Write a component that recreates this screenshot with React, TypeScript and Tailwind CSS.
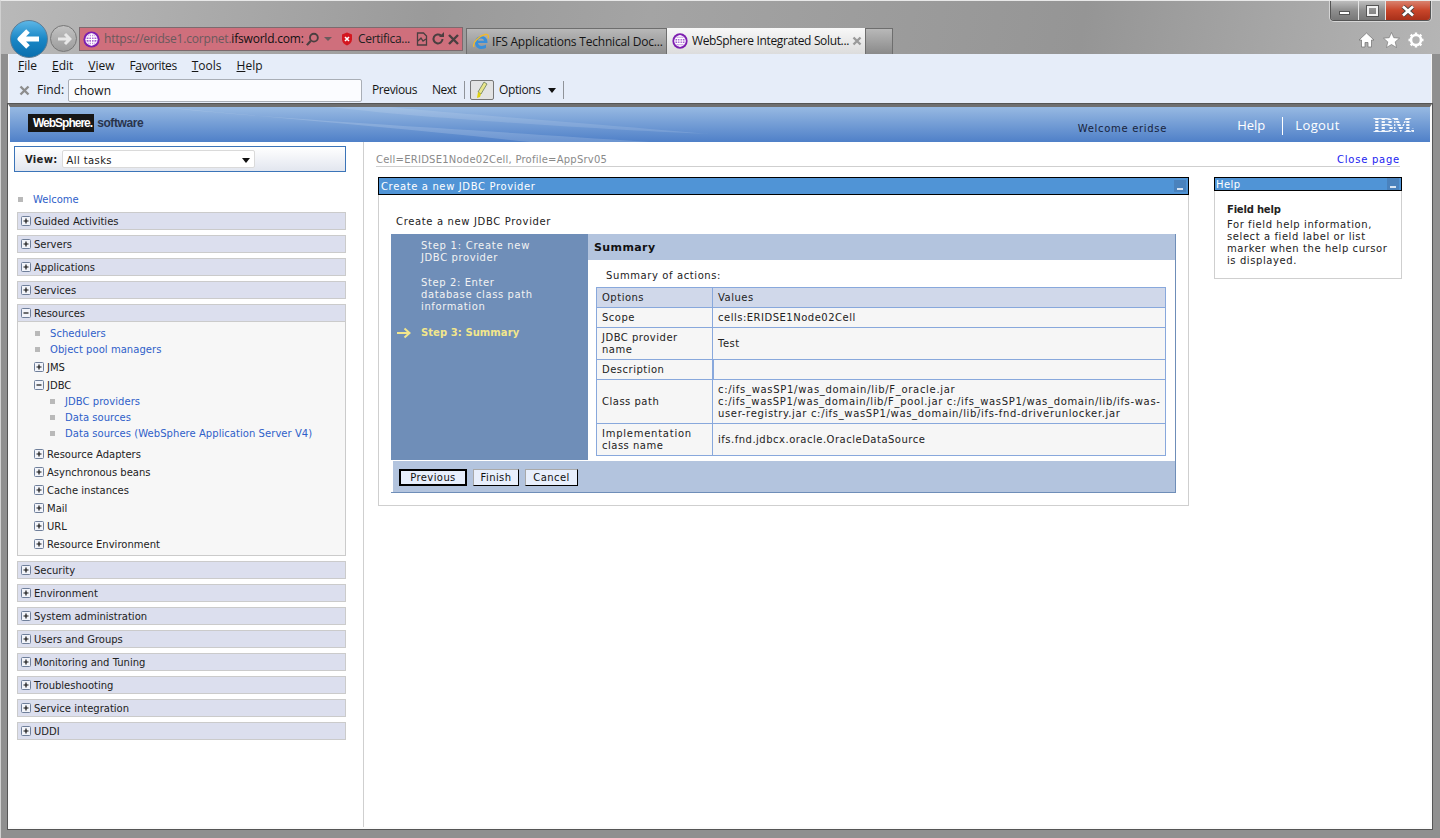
import React from "react";

const V = "font-['DejaVu_Sans',sans-serif]";
const W = `${V} text-[10px]`;
const UI = "font-['Open_Sans','Noto_Sans',sans-serif]";

function Globe({ s = 22 }: { s?: number }) {
  return (
    <svg width={s} height={s} viewBox="0 0 22 22" className="shrink-0">
      <circle cx="11" cy="11" r="10.5" fill="#7d1fb0" />
      <circle cx="11" cy="11" r="7.2" fill="#a55fd0" stroke="#f0e4f8" strokeWidth="1.6" />
      <ellipse cx="11" cy="11" rx="3.4" ry="7" fill="none" stroke="#f0e4f8" strokeWidth="1.5" />
      <path d="M3.500 11h15M5 7.500h12M5 14.500h12M11 3.500v15" stroke="#fff" strokeWidth="1.500" />
    </svg>
  );
}

function PM({ open }: { open?: boolean }) {
  return (
    <svg width="10" height="10" viewBox="0 0 10 10" className="shrink-0">
      <rect x="0.5" y="0.5" width="9" height="9" fill="#f2f4fa" stroke="#6f7f9a" rx="1" />
      <path d={open ? "M2.500 5h5" : "M2.500 5h5M5 2.500v5"} stroke="#111" strokeWidth="1.200" />
    </svg>
  );
}

function Sq() {
  return <span className="block w-[5px] h-[5px] bg-[#b9b9b9] shrink-0" />;
}

function Section({ label, open }: { label: string; open?: boolean }) {
  return (
    <div className={`h-[18px] flex items-center gap-[3px] pl-[3px] bg-[#dcdfee] border border-[#cbcbcb] text-[#222] ${W}`}>
      <PM open={open} />
      <span>{label}</span>
    </div>
  );
}

function NavLink({ label, pad }: { label: string; pad: string }) {
  return (
    <div className={`h-[16px] flex items-center gap-[10px] ${pad} text-[#2f5fc9] ${W} tracking-[0.05px]`}>
      <Sq />
      <span>{label}</span>
    </div>
  );
}

function Sub({ label, open, h = "h-[18px]" }: { label: string; open?: boolean; h?: string }) {
  return (
    <div className={`${h} flex items-center gap-[3px] pl-[16px] text-[#222] ${W}`}>
      <PM open={open} />
      <span>{label}</span>
    </div>
  );
}

function Mini() {
  return (
    <span className="w-[12px] h-[12px] bg-[#4a82bd] flex items-end justify-center pb-[2px] shrink-0">
      <span className="block w-[6px] h-[2px] bg-[#d7e4f3]" />
    </span>
  );
}

function Row({ a, b, h, head, desc }: { a: React.ReactNode; b?: React.ReactNode; h: string; head?: boolean; desc?: boolean }) {
  const bg = head ? "bg-[#d0d8ea]" : "bg-[#f6f6f6]";
  return (
    <div className={`flex ${h} border-b border-[#88a8dc] ${bg} text-[#222] ${W} tracking-[0.5px]`}>
      <div className="w-[116px] shrink-0 border-r border-[#88a8dc] px-[5px] flex items-center leading-[12px]">{a}</div>
      <div className={`flex-1 pl-[5px] pr-[2px] flex items-center leading-[12px] ${desc ? "border-l border-t border-[#88a8dc] -mt-px" : ""}`}>{b}</div>
    </div>
  );
}

function Btn({ label, w, primary }: { label: string; w: string; primary?: boolean }) {
  return (
    <div
      className={`${w} h-[17px] flex items-center justify-center bg-[#e8effc] text-[#111] ${W} tracking-[0.4px] ${
        primary ? "border-2 border-black" : "border border-[#a9a9a9] border-r-black border-b-black"
      }`}
    >
      {label}
    </div>
  );
}

export default function App() {
  return (
    <div className="w-[1440px] h-[838px] overflow-hidden flex flex-col bg-[#8f8f8f] border-t border-t-[#e8e8e8] border-l border-l-[#d0d0d0]">
      {/* Frame top: navigation, address bar, tabs */}
      <div className="h-[53px] shrink-0 relative bg-[linear-gradient(100deg,#b9b9b9_0%,#9a9a9a_30%,#a4a4a4_45%,#959595_75%,#b5b5b5_100%)]">
        <div className="absolute right-[9px] top-0 h-[20px] w-[101px] flex rounded-b-[4px] overflow-hidden border border-t-0 border-[#555] shadow-[0_0_0_1px_rgba(255,255,255,0.5)]">
          <div className="w-[28px] flex items-end justify-center pb-[5px] bg-[linear-gradient(#bdbdbd,#8e8e8e_50%,#777)] border-r border-[#e5e5e5]">
            <span className="block w-[11px] h-[4px] bg-white border border-[#555]" />
          </div>
          <div className="w-[27px] flex items-center justify-center bg-[linear-gradient(#bdbdbd,#8e8e8e_50%,#777)] border-r border-[#e5e5e5]">
            <span className="block w-[11px] h-[10px] border-2 border-[#f1f1f1] outline outline-1 outline-[#555]" />
          </div>
          <div className="flex-1 flex items-center justify-center bg-[linear-gradient(#d9826f,#c8452a_50%,#a8301a)]">
            <svg width="14" height="12" viewBox="0 0 14 12">
              <path d="M2 1.500l10 9M12 1.500l-10 9" stroke="#444" strokeWidth="4.400" />
              <path d="M2 1.500l10 9M12 1.500l-10 9" stroke="#fff" strokeWidth="2.800" />
            </svg>
          </div>
        </div>

        <div className="absolute left-[9px] top-[19px] w-[38px] h-[38px] rounded-full z-10 border border-[#5c7d96] bg-[linear-gradient(#5cb6e6,#1a87c6_50%,#0a6fae)] flex items-center justify-center">
          <svg width="24" height="22" viewBox="0 0 24 22">
            <path d="M11 3L3 11l8 8M4 11h18" fill="none" stroke="#fff" strokeWidth="5" strokeLinejoin="round" />
          </svg>
        </div>
        <div className="absolute left-[49px] top-[24px] w-[27px] h-[27px] rounded-full border border-[#777] bg-[linear-gradient(#c2c2c2,#9c9c9c)] flex items-center justify-center">
          <svg width="16" height="14" viewBox="0 0 16 14">
            <path d="M9 2l5 5-5 5M13 7H2" fill="none" stroke="#e8e8e8" strokeWidth="3" />
          </svg>
        </div>

        <div className="flex items-end h-full pl-[78px] pr-[10px]">
          <div className={`w-[384px] shrink-0 h-[24px] mb-[3px] flex items-center bg-[#cf6f7c] border border-[#7c6a6e] pl-[3px] text-[#222] ${UI} text-[12px] tracking-[-0.2px]`}>
            <Globe s={17} />
            <span className="ml-[4px] w-[196px] shrink-0 whitespace-nowrap text-[#6a5a5c]">
              https://eridse1.corpnet.<span className="text-[#111]">ifsworld.com:</span>
            </span>
            <svg width="15" height="15" viewBox="0 0 16 16" className="ml-[5px] shrink-0">
              <circle cx="9.500" cy="6" r="4.200" fill="none" stroke="#4a3f40" strokeWidth="2" />
              <path d="M6 9.500L2 14" stroke="#4a3f40" strokeWidth="2.400" />
            </svg>
            <span className="ml-[4px] w-0 h-0 border-x-[4px] border-x-transparent border-t-[4px] border-t-[#6a5a5c]" />
            <svg width="12" height="14" viewBox="0 0 12 14" className="ml-[9px] shrink-0">
              <path d="M6 .5l5 2v5c0 3-2.500 5-5 6-2.500-1-5-3-5-6v-5z" fill="#d4161f" />
              <path d="M4 5l4 4M8 5L4 9" stroke="#fff" strokeWidth="1.600" />
            </svg>
            <span className="ml-[5px] w-[55px] shrink-0 whitespace-nowrap tracking-[-0.3px]">Certifica...</span>
            <svg width="14" height="14" viewBox="0 0 14 14" className="ml-[2px] shrink-0">
              <path d="M2.500 1h6l3 3v9h-9z" fill="none" stroke="#4a3f40" strokeWidth="1.300" />
              <path d="M3 9l3-3 2 3 3-2" fill="none" stroke="#4a3f40" strokeWidth="1.300" />
            </svg>
            <svg width="14" height="14" viewBox="0 0 14 14" className="ml-[2px] shrink-0">
              <path d="M11.500 7a4.500 4.500 0 1 1-1.500-3.400" fill="none" stroke="#4a3f40" strokeWidth="2" />
              <path d="M8 5h5V0z" fill="#4a3f40" />
            </svg>
            <svg width="13" height="13" viewBox="0 0 13 13" className="ml-[2px] shrink-0">
              <path d="M2 2l9 9M11 2l-9 9" stroke="#4a3f40" strokeWidth="2.400" />
            </svg>
          </div>

          <div className={`ml-[3px] w-[201px] shrink-0 h-[26px] flex items-center gap-[2px] pl-[5px] bg-[linear-gradient(#b8b8b8,#8e8e8e)] border border-b-0 border-[#6e6e6e] text-[#151515] whitespace-nowrap ${UI} text-[12px] tracking-[-0.2px]`}>
            <svg width="18" height="18" viewBox="0 0 18 18" className="shrink-0">
              <path d="M15.500 10H6c.3 3 4.500 4 8 1.500v3.500c-5 2.500-11 .5-11-5.500C3 4 9 1.500 13 4c2 1.300 2.500 3.500 2.500 6zM6 7.800h6c-.3-3-5.700-3-6 0z" fill="#3a8fd9" />
              <path d="M2 14C0 10 7 3 13 1.500c3-.6 4 1 3 4" fill="none" stroke="#f2b92c" strokeWidth="1.300" />
            </svg>
            <span>IFS Applications Technical Doc...</span>
          </div>
          <div className={`w-[199px] shrink-0 h-[26px] flex items-center pl-[5px] bg-[linear-gradient(#f8f8f8,#dcdcdc)] border-r border-[#6e6e6e] text-[#151515] whitespace-nowrap ${UI} text-[12px] tracking-[-0.35px]`}>
            <Globe s={16} />
            <span className="ml-[4px] w-[157px] shrink-0">WebSphere Integrated Solut...</span>
            <svg width="10" height="10" viewBox="0 0 10 10" className="ml-[3px] shrink-0">
              <path d="M1.500 1.500l7 7M8.500 1.500l-7 7" stroke="#9a9a9a" strokeWidth="2.400" />
            </svg>
          </div>
          <div className="w-[27px] shrink-0 h-[26px] bg-[linear-gradient(#b8b8b8,#8a8a8a)] border-r border-t border-[#6e6e6e]" />

          <div className="flex-1 flex justify-end items-center gap-[8px] h-[26px] mb-[1px] pr-[6px]">
            <svg width="17" height="16" viewBox="0 0 17 16">
              <path d="M8.500 1L1 8h2.500v7h3.500v-4.500h3V15h3.500V8H16z" fill="#fff" stroke="#6d6d6d" strokeWidth=".7" />
            </svg>
            <svg width="17" height="16" viewBox="0 0 17 16">
              <path d="M8.500.5l2.300 5.200 5.700.5-4.300 3.700 1.300 5.600-5-3-5 3 1.300-5.600L.5 6.200l5.700-.5z" fill="#fff" stroke="#6d6d6d" strokeWidth=".6" />
            </svg>
            <svg width="16" height="16" viewBox="0 0 16 16">
              <circle cx="8" cy="8" r="5" fill="none" stroke="#fff" strokeWidth="2.600" />
              <path d="M8 .5v3M8 12.500v3M.5 8h3M12.500 8h3M2.700 2.700l2.100 2.100M11.200 11.200l2.100 2.100M13.300 2.700l-2.100 2.100M4.800 11.200l-2.100 2.100" stroke="#fff" strokeWidth="2.400" />
            </svg>
          </div>
        </div>
      </div>

      {/* Inner browser area with frame sides */}
      <div className="flex-1 min-h-0 flex flex-col pl-[7px] pr-[8px] pb-[9px]">
        <div className={`h-[50px] shrink-0 bg-[#e6edf9] border-l border-r border-[#f5f5f5] pl-[9px] pt-[1px] text-[#151515] ${UI} text-[12px]`}>
          <div className="h-[22px] flex items-center gap-[15px]">
            <span><span className="underline">F</span>ile</span>
            <span><span className="underline">E</span>dit</span>
            <span><span className="underline">V</span>iew</span>
            <span className="tracking-[-0.4px]">F<span className="underline">a</span>vorites</span>
            <span><span className="underline">T</span>ools</span>
            <span><span className="underline">H</span>elp</span>
          </div>
          <div className="h-[26px] flex items-center">
            <svg width="11" height="11" viewBox="0 0 11 11" className="ml-px shrink-0">
              <path d="M1.500 1.500l8 8M9.500 1.500l-8 8" stroke="#8d8d8d" strokeWidth="2.400" />
            </svg>
            <span className="ml-[7px] w-[26px]">Find:</span>
            <div className="ml-[5px] w-[294px] h-[23px] bg-[#fbfcff] border border-[#a9aeb6] rounded-[2px] pl-[5px] pt-[1px] flex items-center shrink-0">chown</div>
            <span className="ml-[10px] w-[45px] tracking-[-0.4px] whitespace-nowrap">Previous</span>
            <span className="ml-[15px] w-[24px] tracking-[-0.5px] whitespace-nowrap">Next</span>
            <span className="ml-[8px] w-px h-[18px] bg-[#8f9399]" />
            <div className="ml-[5px] w-[24px] h-[20px] rounded-[2px] border border-[#777] bg-[#e3e3e3] flex items-center justify-center shrink-0">
              <svg width="14" height="18" viewBox="0 0 14 18">
                <path d="M9 1l3 2-6 10-3-2z" fill="#e8e58a" stroke="#6a7a5a" strokeWidth=".8" />
                <path d="M3 11l3 2-1 3-3 1z" fill="#e0d20f" />
              </svg>
            </div>
            <span className="ml-[5px] w-[42px] tracking-[-0.4px] whitespace-nowrap">Options</span>
            <span className="ml-[7px] w-0 h-0 border-x-[4px] border-x-transparent border-t-[5px] border-t-[#111]" />
            <span className="ml-[7px] w-px h-[18px] bg-[#8f9399]" />
          </div>
        </div>

        <div className="flex-1 min-h-0 flex flex-col bg-white border-t-[3px] border-t-[#6f6f6f] border-x-2 border-x-[#fbfbfb] border-b-2 border-b-[#fbfbfb] outline outline-1 outline-[#555]">
          {/* Banner */}
          <div className="h-[35px] shrink-0 relative bg-[linear-gradient(#97b9e2,#4f80c8)] overflow-hidden flex items-center pl-[18px] pr-[16px]">
            <svg className="absolute inset-0 w-full h-full" viewBox="0 0 1420 35" preserveAspectRatio="none">
              <path d="M150 0C260 12 420 20 640 35H520C380 20 260 10 150 0z" fill="#ffffff" opacity="0.16" />
              <path d="M320 0C420 12 620 24 700 27L640 22C560 15 440 6 380 0z" fill="#ffffff" opacity="0.12" />
            </svg>
            <div className="relative flex items-center self-start mt-[7px]">
              <span className="h-[18px] pl-[5px] pr-[2px] bg-[#161616] text-white font-['Liberation_Sans',sans-serif] font-bold text-[12px] tracking-[-1px] flex items-center">WebSphere.</span>
              <span className="ml-[3px] text-[#29344d] font-['Liberation_Sans',sans-serif] font-bold text-[12px] tracking-[-0.4px]">software</span>
            </div>
            <span className={`relative ml-auto mt-[8px] text-[#17233c] ${W} tracking-[0.7px]`}>Welcome eridse</span>
            <span className={`relative ml-[70px] mt-[3px] text-white ${UI} text-[13px]`}>Help</span>
            <span className="relative ml-[17px] mt-[3px] w-px h-[18px] bg-white" />
            <span className={`relative ml-[12px] mt-[3px] text-white ${UI} text-[13px] tracking-[0.4px]`}>Logout</span>
            <span className="relative ml-[33px] mt-[1px] font-['Liberation_Serif',serif] font-bold text-[21px] tracking-[-1.5px] leading-none bg-[repeating-linear-gradient(#f4f7fc_0px,#f4f7fc_2px,transparent_2px,transparent_3px)] bg-clip-text text-transparent">IBM.</span>
          </div>

          <div className="flex-1 min-h-0 flex">
            {/* Sidebar */}
            <div className="w-[354px] shrink-0 border-r border-[#cfcfcf] pl-[4px] pr-[17px] pt-[4px]">
              <div className="h-[26px] w-[332px] border border-[#3b74b8] bg-[linear-gradient(#ffffff,#e2e6ef)] flex items-center pl-[10px]">
                <span className={`font-bold text-[#222] ${W} tracking-[0.3px]`}>View:</span>
                <div className={`ml-[4px] w-[193px] h-[18px] bg-white border border-[#dadada] rounded-[2px] flex items-center pl-[4px] pr-[4px] pt-[2px] text-[#222] ${W} tracking-[0.4px]`}>
                  <span className="flex-1">All tasks</span>
                  <span className="w-0 h-0 border-x-[4px] border-x-transparent border-t-[5px] border-t-[#111]" />
                </div>
              </div>
              <div className="ml-[3px] w-[329px]">
                <div className={`mt-[19px] h-[16px] flex items-center gap-[10px] pl-[1px] text-[#2f5fc9] ${W}`}>
                  <Sq />
                  <span>Welcome</span>
                </div>
                <div className="mt-[5px] flex flex-col gap-[5px]">
                  <Section label="Guided Activities" />
                  <Section label="Servers" />
                  <Section label="Applications" />
                  <Section label="Services" />
                  <div>
                    <Section label="Resources" open />
                    <div className="h-[234px] bg-[#f7f7f7] border border-t-0 border-[#cbcbcb] pt-[3px]">
                      <NavLink label="Schedulers" pad="pl-[17px]" />
                      <NavLink label="Object pool managers" pad="pl-[17px]" />
                      <div className="h-px" />
                      <Sub label="JMS" />
                      <Sub label="JDBC" open h="h-[17px] pt-[1px]" />
                      <NavLink label="JDBC providers" pad="pl-[32px]" />
                      <NavLink label="Data sources" pad="pl-[32px]" />
                      <NavLink label="Data sources (WebSphere Application Server V4)" pad="pl-[32px]" />
                      <div className="h-[4px]" />
                      <Sub label="Resource Adapters" />
                      <Sub label="Asynchronous beans" />
                      <Sub label="Cache instances" />
                      <Sub label="Mail" />
                      <Sub label="URL" />
                      <Sub label="Resource Environment" />
                    </div>
                  </div>
                  <Section label="Security" />
                  <Section label="Environment" />
                  <Section label="System administration" />
                  <Section label="Users and Groups" />
                  <Section label="Monitoring and Tuning" />
                  <Section label="Troubleshooting" />
                  <Section label="Service integration" />
                  <Section label="UDDI" />
                </div>
              </div>
            </div>

            {/* Main */}
            <div className="flex-1 min-w-0 pl-[12px] pr-[30px] pt-[10px]">
              <div className={`h-[15px] border-b border-[#cfcfcf] flex items-center justify-between ${W} leading-[12px] pt-[2px]`}>
                <span className="text-[#8a8a8a] tracking-[0.23px]">Cell=ERIDSE1Node02Cell, Profile=AppSrv05</span>
                <span className="text-[#1c1cf0] tracking-[0.75px]">Close page</span>
              </div>
              <div className="mt-[10px] flex items-start">
                <div className="ml-[2px] w-[811px] shrink-0">
                  <div className={`h-[18px] bg-[#5094d6] border border-black flex items-center justify-between pl-[2px] pr-[2px] text-white ${W} tracking-[0.63px]`}>
                    <span>Create a new JDBC Provider</span>
                    <Mini />
                  </div>
                  <div className="h-[311px] border border-t-0 border-[#cfcfcf] pl-[12px] pr-[12px] pt-[21px]">
                    <div className={`pl-[5px] h-[12px] leading-[12px] text-[#222] ${W} tracking-[0.65px]`}>Create a new JDBC Provider</div>
                    <div className="mt-[6px] h-[259px] border-r border-b border-[#6f8eb8] flex flex-col">
                      <div className="h-[226px] flex">
                        <div className={`w-[197px] shrink-0 bg-[#6f8eb8] text-[#f3f3f3] pt-[6px] ${W} leading-[12px] tracking-[0.6px]`}>
                          <div className="pl-[30px] pr-[10px]">
                            <span className="tracking-[0.73px]">Step 1: Create new</span>
                            <br />
                            JDBC provider
                          </div>
                          <div className="pl-[30px] mt-[13px]">
                            Step 2: Enter
                            <br />
                            database class path
                            <br />
                            information
                          </div>
                          <div className="mt-[14px] pl-[5px] flex items-center text-[#f2e68c] font-bold tracking-[0.07px]">
                            <svg width="15" height="12" viewBox="0 0 15 12" className="shrink-0 mr-[10px]">
                              <path d="M1 6h12M8.500 1.500L13.500 6l-5 4.500" fill="none" stroke="#f2e68c" strokeWidth="2" />
                            </svg>
                            Step 3: Summary
                          </div>
                        </div>
                        <div className="flex-1 min-w-0">
                          <div className={`h-[26px] bg-[#b3c4de] flex items-center pl-[6px] pt-[2px] font-bold text-[#111] ${V} text-[11px] tracking-[0.4px]`}>Summary</div>
                          <div className={`mt-[10px] pl-[18px] h-[12px] leading-[12px] text-[#222] ${W} tracking-[0.6px]`}>Summary of actions:</div>
                          <div className="mt-[5px] ml-[8px] w-[570px] border-t border-l border-r border-[#88a8dc]">
                            <Row head a="Options" b="Values" h="h-[20px]" />
                            <Row a="Scope" b="cells:ERIDSE1Node02Cell" h="h-[20px]" />
                            <Row
                              a={
                                <span>
                                  JDBC provider
                                  <br />
                                  name
                                </span>
                              }
                              b="Test"
                              h="h-[32px]"
                            />
                            <Row desc a="Description" h="h-[20px]" />
                            <Row
                              a="Class path"
                              b={
                                <span className="whitespace-nowrap tracking-[0.66px]">
                                  <span className="tracking-[0.7px]">c:/ifs_wasSP1/was_domain/lib/F_oracle.jar</span>
                                  <br />
                                  c:/ifs_wasSP1/was_domain/lib/F_pool.jar c:/ifs_wasSP1/was_domain/lib/ifs-was-
                                  <br />
                                  user-registry.jar c:/ifs_wasSP1/was_domain/lib/ifs-fnd-driverunlocker.jar
                                </span>
                              }
                              h="h-[44px]"
                            />
                            <Row
                              a={
                                <span>
                                  <span className="tracking-[0.75px]">Implementation</span>
                                  <br />
                                  class name
                                </span>
                              }
                              b="ifs.fnd.jdbcx.oracle.OracleDataSource"
                              h="h-[32px]"
                            />
                          </div>
                        </div>
                      </div>
                      <div className="flex-1 ml-px bg-[#b3c4de] border-t border-l border-[#ffffff] flex items-center gap-[6px] pl-[6px] pt-[1px]">
                        <Btn primary label="Previous" w="w-[68px]" />
                        <Btn label="Finish" w="w-[46px]" />
                        <Btn label="Cancel" w="w-[53px]" />
                      </div>
                    </div>
                  </div>
                </div>

                <div className="ml-[25px] w-[188px] shrink-0">
                  <div className={`h-[14px] bg-[#5094d6] border border-black flex items-center justify-between pr-[2px] pl-[1px] text-white ${W} tracking-[0.4px]`}>
                    <span>Help</span>
                    <Mini />
                  </div>
                  <div className={`h-[88px] border border-t-0 border-[#cfcfcf] pl-[12px] pt-[13px] text-[#222] ${W} leading-[12px] tracking-[0.58px]`}>
                    <div className="font-bold mb-[3px] tracking-[-0.2px]">Field help</div>
                    For field help information,
                    <br />
                    select a field label or list
                    <br />
                    marker when the help cursor
                    <br />
                    is displayed.
                  </div>
                </div>
              </div>
            </div>
          </div>
        </div>
      </div>
    </div>
  );
}
